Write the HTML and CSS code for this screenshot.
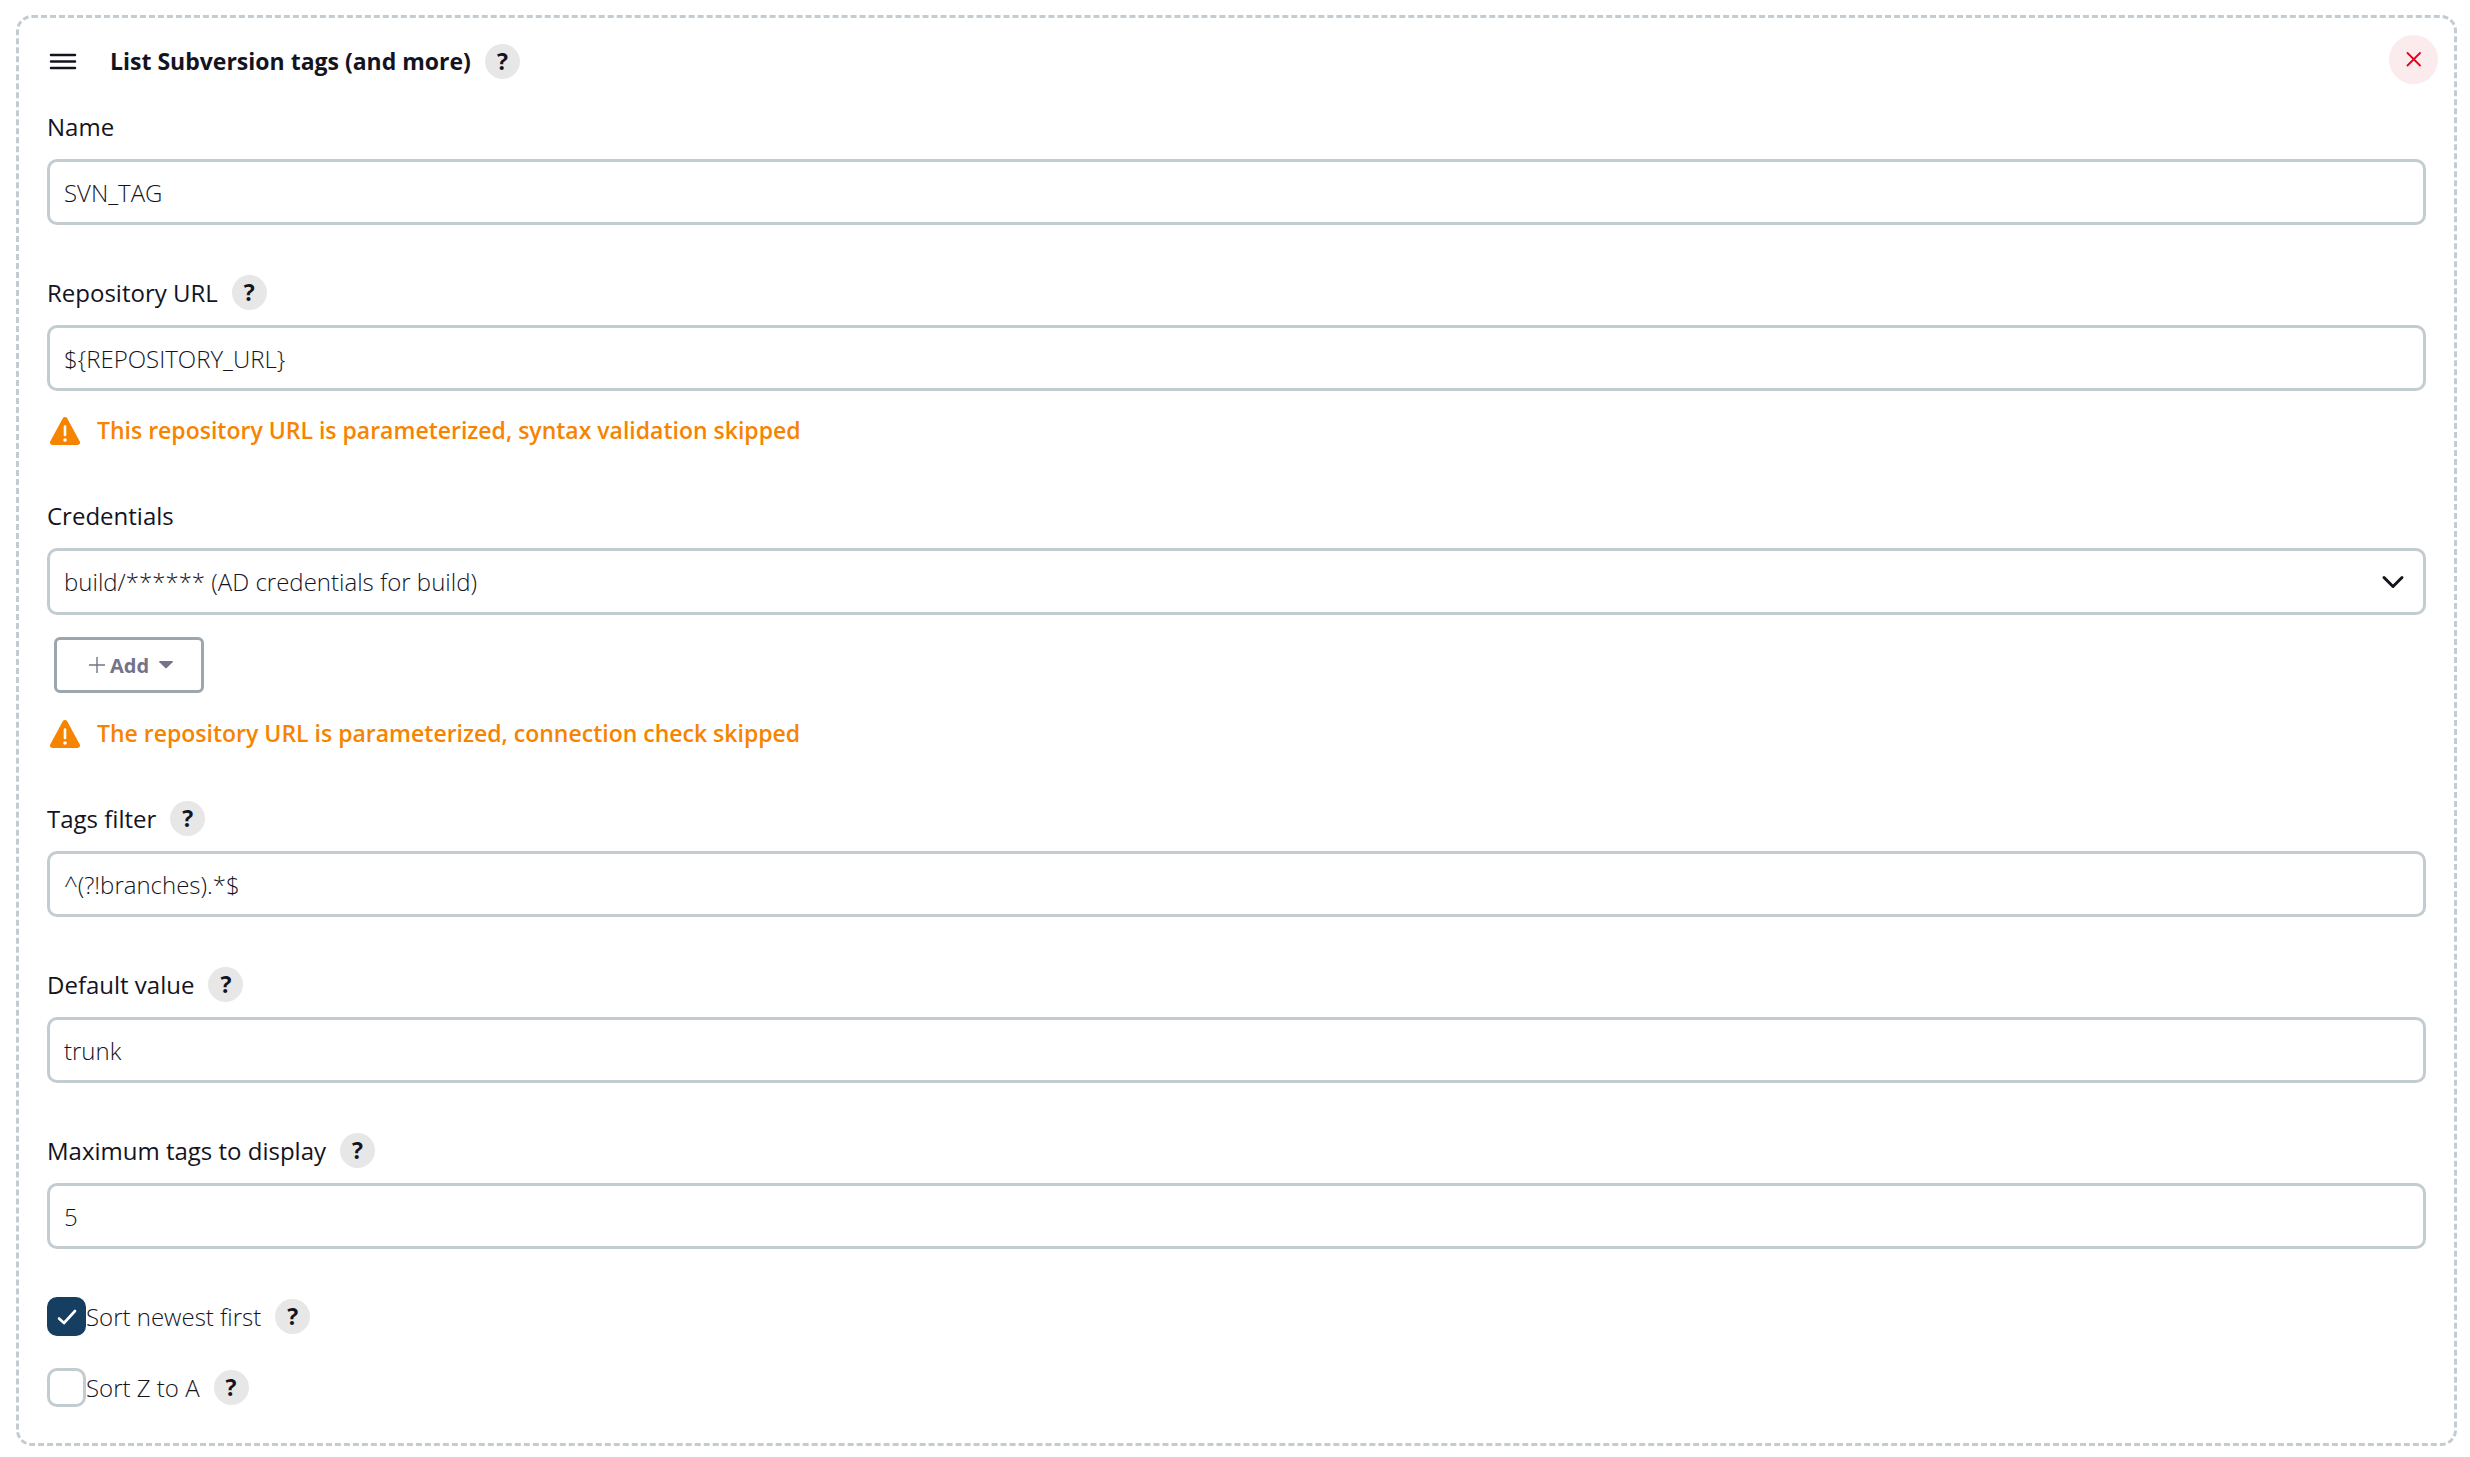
FILE: index.html
```html
<!DOCTYPE html>
<html lang="en">
<head>
    <meta charset="UTF-8">
    <meta name="viewport" content="width=device-width, initial-scale=1.0">
    <title>List Subversion tags (and more)</title>
    <link rel="stylesheet" href="styles.css">
</head>
<body>
    <form class="parameter">
        <div class="parameter-header">
            <div class="drag-handle">
                <svg width="28" height="18" viewBox="0 0 28 18" fill="none" stroke="currentColor" stroke-width="2.5" stroke-linecap="round">
                    <path d="M2 2h24M2 8.5h24M2 15h24"/>
                </svg>
            </div>
            <div class="label-row">
                <h1>List Subversion tags (and more)</h1>
                <button type="button" class="help-btn" aria-label="Help for List Subversion tags">?</button>
            </div>
            <button type="button" class="delete-btn" aria-label="Delete">
                <svg width="16" height="16" viewBox="0 0 16 16" fill="none" stroke="currentColor" stroke-width="1.8" stroke-linecap="round">
                    <path d="M1.5 1l12.5 12.5M14 1L1.5 13.5"/>
                </svg>
            </button>
        </div>

        <div class="field">
            <div class="label-row">
                <label for="name">Name</label>
            </div>
            <input type="text" id="name" class="text-input" value="SVN_TAG">
        </div>

        <div class="field">
            <div class="label-row">
                <label for="repository-url">Repository URL</label>
                <button type="button" class="help-btn" aria-label="Help for Repository URL">?</button>
            </div>
            <input type="text" id="repository-url" class="text-input" value="${REPOSITORY_URL}">
            <div class="warning">
                <svg width="32" height="30" viewBox="0 0 32 30">
                    <path fill="currentColor" d="M13.8 2.2a2.5 2.5 0 0 1 4.4 0l12.6 23.3a2.4 2.4 0 0 1-2.1 3.5H3.3a2.4 2.4 0 0 1-2.1-3.5z"/>
                    <path stroke="#fff" stroke-width="2.6" stroke-linecap="round" d="M16 10.5v8.5"/>
                    <circle cx="16" cy="24" r="1.8" fill="#fff"/>
                </svg>
                <span>This repository URL is parameterized, syntax validation skipped</span>
            </div>
        </div>

        <div class="field">
            <div class="label-row">
                <label for="credentials">Credentials</label>
            </div>
            <div class="select-wrapper">
                <select id="credentials" class="text-input">
                    <option>build/****** (AD credentials for build)</option>
                </select>
                <svg class="chevron" width="24" height="16" viewBox="0 0 24 16" fill="none" stroke="currentColor" stroke-width="3" stroke-linecap="round" stroke-linejoin="round">
                    <path d="M3 3.5l9 9 9-9"/>
                </svg>
            </div>
            <button type="button" class="add-btn">
                <svg width="16" height="16" viewBox="0 0 16 16" stroke="currentColor" stroke-width="1.4">
                    <path d="M8 0v16M0 8h16"/>
                </svg>
                <span>Add</span>
                <svg class="caret" width="14" height="8" viewBox="0 0 14 8" fill="currentColor">
                    <path d="M1 0h12a.8.8 0 0 1 .6 1.2L7.7 7a1 1 0 0 1-1.4 0L.4 1.2A.8.8 0 0 1 1 0z"/>
                </svg>
            </button>
            <div class="warning">
                <svg width="32" height="30" viewBox="0 0 32 30">
                    <path fill="currentColor" d="M13.8 2.2a2.5 2.5 0 0 1 4.4 0l12.6 23.3a2.4 2.4 0 0 1-2.1 3.5H3.3a2.4 2.4 0 0 1-2.1-3.5z"/>
                    <path stroke="#fff" stroke-width="2.6" stroke-linecap="round" d="M16 10.5v8.5"/>
                    <circle cx="16" cy="24" r="1.8" fill="#fff"/>
                </svg>
                <span>The repository URL is parameterized, connection check skipped</span>
            </div>
        </div>

        <div class="field">
            <div class="label-row">
                <label for="tags-filter">Tags filter</label>
                <button type="button" class="help-btn" aria-label="Help for Tags filter">?</button>
            </div>
            <input type="text" id="tags-filter" class="text-input" value="^(?!branches).*$">
        </div>

        <div class="field">
            <div class="label-row">
                <label for="default-value">Default value</label>
                <button type="button" class="help-btn" aria-label="Help for Default value">?</button>
            </div>
            <input type="text" id="default-value" class="text-input" value="trunk">
        </div>

        <div class="field">
            <div class="label-row">
                <label for="max-tags">Maximum tags to display</label>
                <button type="button" class="help-btn" aria-label="Help for Maximum tags to display">?</button>
            </div>
            <input type="text" id="max-tags" class="text-input" value="5">
        </div>

        <div class="checkbox-list">
            <div class="checkbox-row">
                <input type="checkbox" id="newest-first" checked>
                <label for="newest-first">Sort newest first</label>
                <button type="button" class="help-btn" aria-label="Help for Sort newest first">?</button>
            </div>
            <div class="checkbox-row">
                <input type="checkbox" id="z-to-a">
                <label for="z-to-a">Sort Z to A</label>
                <button type="button" class="help-btn" aria-label="Help for Sort Z to A">?</button>
            </div>
        </div>
    </form>
</body>
</html>
```
FILE: styles.css
```css
* {
    box-sizing: border-box;
}

body {
    margin: 0;
    padding: 15px 13px 11px 16px;
    background-color: #ffffff;
    color: #14141f;
    font-family: "Segoe UI", "Open Sans", sans-serif;
    font-size: 24px;
    line-height: 35px;
}

button, input, select {
    font-family: inherit;
    color: inherit;
}

.parameter {
    display: flex;
    flex-direction: column;
    gap: 50px;
    padding: 17px 28px 36px;
    border: 3px dashed #c3ccd1;
    border-radius: 16px;
}

/* Header */
.parameter-header {
    display: flex;
    align-items: flex-start;
    margin-right: -12px;
    margin-bottom: -25px;
}

.parameter-header .label-row, .drag-handle {
    margin-top: 9px;
}

.drag-handle {
    display: flex;
    align-items: center;
    width: 63px;
    height: 35px;
    padding-left: 2px;
    cursor: move;
}

h1 {
    margin: 0;
    font-size: 23px;
    font-weight: 700;
}

.delete-btn {
    display: flex;
    align-items: center;
    justify-content: center;
    width: 49px;
    height: 49px;
    margin-left: auto;
    padding: 0;
    border: none;
    border-radius: 50%;
    background-color: #fcebed;
    color: #e6001f;
    cursor: pointer;
}

/* Fields */
.field {
    display: flex;
    flex-direction: column;
}

.label-row {
    display: flex;
    align-items: center;
    gap: 14px;
    height: 35px;
    font-weight: 500;
}

.help-btn {
    width: 35px;
    height: 35px;
    padding: 0;
    border: none;
    border-radius: 50%;
    background-color: #e7e7e7;
    font-size: 23px;
    font-weight: 700;
    line-height: 35px;
    cursor: pointer;
}

.text-input {
    width: 100%;
    height: 66px;
    margin-top: 15px;
    padding: 0 14px;
    border: 3px solid #c3ccd1;
    border-radius: 10px;
    background-color: #ffffff;
    font-size: 24px;
    font-weight: 350;
}

.select-wrapper {
    position: relative;
}

select.text-input {
    display: block;
    height: 67px;
    appearance: none;
}

.chevron {
    position: absolute;
    right: 21px;
    bottom: 25px;
    pointer-events: none;
}

.add-btn {
    display: flex;
    align-items: center;
    align-self: flex-start;
    gap: 5px;
    height: 56px;
    margin: 22px 0 1px 7px;
    padding: 0 28px 0 32px;
    border: 3px solid #9ba6ae;
    border-radius: 6px;
    background-color: #ffffff;
    color: #73738c;
    font-size: 20px;
    font-weight: 700;
    cursor: pointer;
}

.caret {
    margin-left: 5px;
}

.warning {
    display: flex;
    align-items: center;
    gap: 16px;
    height: 35px;
    margin-top: 22px;
    padding-left: 2px;
    color: #f78400;
    font-size: 23px;
    font-weight: 600;
}

/* Checkboxes */
.checkbox-list {
    display: flex;
    flex-direction: column;
    gap: 32px;
    margin-top: -2px;
}

.checkbox-row {
    display: flex;
    align-items: center;
    font-weight: 350;
}

.checkbox-row input {
    appearance: none;
    width: 39px;
    height: 39px;
    margin: 0;
    border: 3px solid #c3ccd1;
    border-radius: 10px;
}

.checkbox-row input:checked {
    border-color: #153e61;
    background: #153e61 url("data:image/svg+xml,%3Csvg xmlns='http://www.w3.org/2000/svg' viewBox='0 0 20 16' fill='none' stroke='white' stroke-width='2.6' stroke-linecap='round' stroke-linejoin='round'%3E%3Cpath d='M2 9.5l5 4.5L18 2'/%3E%3C/svg%3E") no-repeat center / 20px 16px;
}

.checkbox-row .help-btn {
    margin-left: 14px;
}
```
